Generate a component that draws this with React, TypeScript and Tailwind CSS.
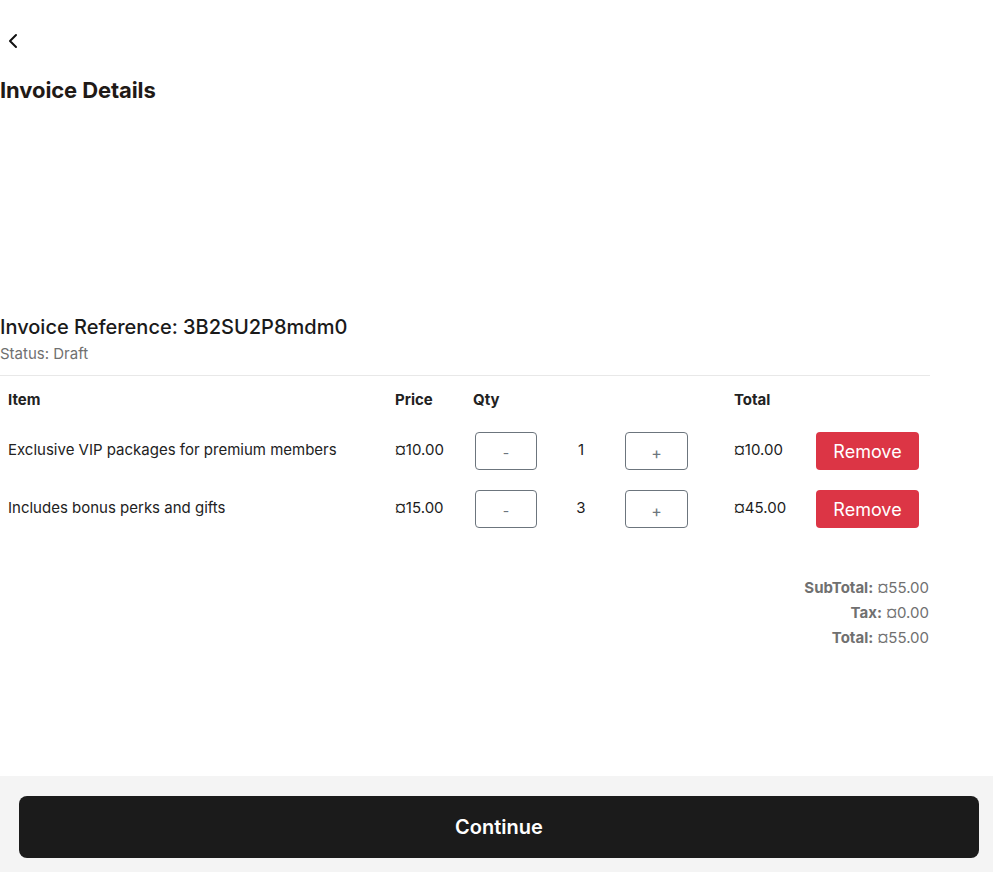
import { ChevronLeft } from 'lucide-react';

const items = [
  { id: 1, name: 'Exclusive VIP packages for premium members', price: 10, qty: 1 },
  { id: 2, name: 'Includes bonus perks and gifts', price: 15, qty: 3 },
];

const money = (n: number) => `¤${n.toFixed(2)}`;

export default function App() {
  const subtotal = items.reduce((s, i) => s + i.price * i.qty, 0);

  return (
    <div className="h-screen overflow-hidden bg-white flex flex-col font-['Inter',sans-serif] text-[#1c1c1c]">
      {/* header */}
      <div className="pt-[29px]">
        <button className="ml-[1px] w-6 h-6 flex items-center justify-center text-[#111]">
          <ChevronLeft size={24} strokeWidth={2} />
        </button>
        <h1 className="mt-[22px] text-[22px] leading-[30px] font-bold tracking-[-0.1px] text-[#1f1a17]">Invoice Details</h1>
      </div>

      {/* invoice */}
      <div className="w-[930px] mt-[208px]">
        <h2 className="text-[20px] leading-[28px] font-medium text-[#1a1a1a]">Invoice Reference: 3B2SU2P8mdm0</h2>
        <p className="text-[15px] leading-[20px] text-[#707070] mt-[3px]">Status: Draft</p>
        <div className="mt-[11px] border-t border-[#e8e8e8]" />

        <table className="w-full table-fixed border-collapse text-[15px]">
          <colgroup>
            <col className="w-[387px]" />
            <col className="w-[78px]" />
            <col className="w-[80px]" />
            <col className="w-[72px]" />
            <col className="w-[109px]" />
            <col className="w-[82px]" />
            <col />
          </colgroup>
          <thead>
            <tr className="h-[46px] text-left font-bold text-[#222]">
              <th className="pl-2 pt-[3px] font-bold">Item</th>
              <th className="pl-2 pt-[3px] font-bold">Price</th>
              <th className="pl-2 pt-[3px] font-bold">Qty</th>
              <th />
              <th />
              <th className="pl-2 pt-[3px] font-bold">Total</th>
              <th />
            </tr>
          </thead>
          <tbody>
            {items.map((it) => (
              <tr key={it.id} className="h-[58px]">
                <td className="pl-2 pb-[2px] text-[#222]">{it.name}</td>
                <td className="pl-2 pb-[2px]">{money(it.price)}</td>
                <td className="pl-2">
                  <button className="ml-[2px] w-[62px] h-[38px] border border-[#6c757d] rounded-[4px] text-[#6c757d] text-[14px] leading-none pt-[3px]">-</button>
                </td>
                <td className="text-center pb-[2px]">{it.qty}</td>
                <td className="pl-2">
                  <button className="w-[63px] h-[38px] border border-[#6c757d] rounded-[4px] text-[#6c757d] text-[16px] leading-none pt-[3px]">+</button>
                </td>
                <td className="pl-2 pb-[2px]">{money(it.price * it.qty)}</td>
                <td className="pl-2">
                  <button className="w-[103px] h-[38px] rounded-[4px] bg-[#dc3545] text-white text-[18px] pt-[1px]">Remove</button>
                </td>
              </tr>
            ))}
          </tbody>
        </table>

        <div className="mt-[40px] flex flex-col items-end gap-[5px] text-[15px] leading-[20px] text-[#707070] pr-px">
          <p><span className="font-bold">SubTotal:</span> {money(subtotal)}</p>
          <p><span className="font-bold">Tax:</span> {money(0)}</p>
          <p><span className="font-bold">Total:</span> {money(subtotal)}</p>
        </div>
      </div>

      <div className="flex-1" />

      {/* footer */}
      <div className="bg-[#f4f4f4] pl-[19px] pr-[14px] pt-[20px] pb-[14px]">
        <button className="w-full h-[62px] rounded-[8px] bg-[#1b1b1b] text-white text-[20px] font-semibold">Continue</button>
      </div>
    </div>
  );
}
